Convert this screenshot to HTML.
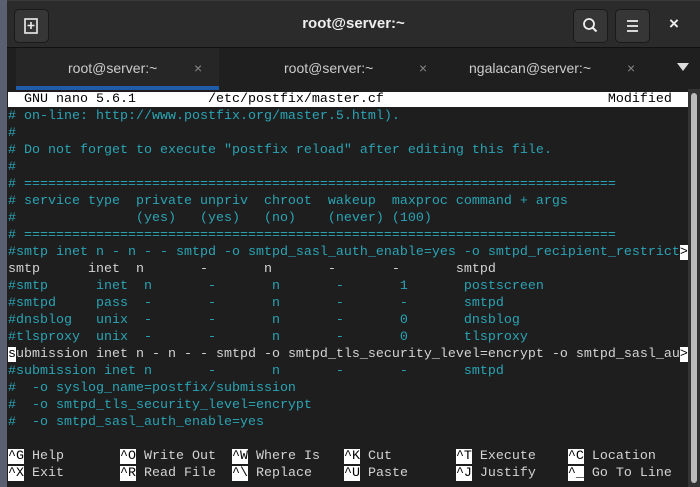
<!DOCTYPE html>
<html><head><style>
body{margin:0;width:700px;height:487px;overflow:hidden;background:#2a2f3a;font-family:"Liberation Sans",sans-serif;position:relative}
.win{position:absolute;left:7px;top:0;width:693px;height:487px;background:#1e1e1e;overflow:hidden}
.title{position:absolute;left:0;top:0;width:693px;height:47px;background:#2b2b2b;border-top:1px solid #3a3a3a}
.btn{position:absolute;top:8px;width:33px;height:32px;background:#363636;border-radius:5px;border:1px solid #1a1a1a}
.tt{position:absolute;left:0;width:693px;top:14px;text-align:center;color:#eee;font-size:15px;font-weight:bold}
.tabs{position:absolute;left:0;top:47px;width:693px;height:42px;background:#1f1f1f;border-top:1px solid #111}
.tab{position:absolute;top:0;height:42px;color:#ccc;font-size:14px;line-height:40px}
.x{position:absolute;color:#888;font-size:14px}
pre{position:absolute;left:1px;top:91px;margin:0;font-family:"Liberation Mono","DejaVu Sans Mono",monospace;font-size:13.33px;line-height:17px;color:#d3d3d3}
.c{color:#2aa4b5}
.i{background:#fff;color:#000}
.sb{position:absolute;left:681px;top:89px;width:12px;height:398px;background:#333}
</style></head><body>
<div style="position:absolute;left:0;top:0;width:7px;height:487px;background:#5a6070"></div>
<div class="win">
<div class="title">
 <div class="btn" style="left:7px"><svg width="33" height="32"><rect x="10" y="9" width="12" height="14" fill="none" stroke="#eee" stroke-width="1.6"/><path d="M16 12v7M12.5 15.5h7" stroke="#eee" stroke-width="1.6"/></svg></div>
 <div class="tt">root@server:~</div>
 <div class="btn" style="left:566px"><svg width="33" height="32"><circle cx="15" cy="14" r="5" fill="none" stroke="#eee" stroke-width="1.8"/><path d="M18.5 17.5l4 4" stroke="#eee" stroke-width="2"/></svg></div>
 <div class="btn" style="left:608px"><svg width="33" height="32"><path d="M11 11h11M11 16h11M11 21h11" stroke="#eee" stroke-width="1.8"/></svg></div>
 <div style="position:absolute;left:662px;top:13px;color:#eee;font-size:17px;font-weight:bold">×</div>
</div>
<div class="tabs">
 <div class="tab" style="left:9px;width:203px;background:#262626"><span style="position:absolute;left:52px">root@server:~</span><span class="x" style="left:178px">×</span><div style="position:absolute;left:0;bottom:0;width:203px;height:4px;background:#1f5ba8"></div></div>
 <div class="tab" style="left:212px;width:220px"><span style="position:absolute;left:65px">root@server:~</span><span class="x" style="left:200px">×</span></div>
 <div class="tab" style="left:432px;width:200px"><span style="position:absolute;left:30px">ngalacan@server:~</span><span class="x" style="left:188px">×</span></div>
 <div style="position:absolute;left:670px;top:15px;width:0;height:0;border-left:6px solid transparent;border-right:6px solid transparent;border-top:8px solid #ddd"></div>
</div>
<div class="sb"><div style="position:absolute;left:3px;top:4px;width:6px;height:390px;background:#bbb;border-radius:3px"></div></div>
<pre><span class="i">  GNU nano 5.6.1         /etc/postfix/master.cf                            Modified  </span>
<span class="c"># on-line: http://www.postfix.org/master.5.html).
#
# Do not forget to execute "postfix reload" after editing this file.
#
# ==========================================================================
# service type  private unpriv  chroot  wakeup  maxproc command + args
#               (yes)   (yes)   (no)    (never) (100)
# ==========================================================================
#smtp inet n - n - - smtpd -o smtpd_sasl_auth_enable=yes -o smtpd_recipient_restrict</span><span class="i">&gt;</span>
smtp      inet  n       -       n       -       -       smtpd
<span class="c">#smtp      inet  n       -       n       -       1       postscreen
#smtpd     pass  -       -       n       -       -       smtpd
#dnsblog   unix  -       -       n       -       0       dnsblog
#tlsproxy  unix  -       -       n       -       0       tlsproxy</span>
<span class="i">s</span>ubmission inet n - n - - smtpd -o smtpd_tls_security_level=encrypt -o smtpd_sasl_au<span class="i">&gt;</span>
<span class="c">#submission inet n       -       n       -       -       smtpd
#  -o syslog_name=postfix/submission
#  -o smtpd_tls_security_level=encrypt
#  -o smtpd_sasl_auth_enable=yes</span>

<span class="i">^G</span> Help       <span class="i">^O</span> Write Out  <span class="i">^W</span> Where Is   <span class="i">^K</span> Cut        <span class="i">^T</span> Execute    <span class="i">^C</span> Location
<span class="i">^X</span> Exit       <span class="i">^R</span> Read File  <span class="i">^\</span> Replace    <span class="i">^U</span> Paste      <span class="i">^J</span> Justify    <span class="i">^_</span> Go To Line</pre>
</div>
</body></html>
